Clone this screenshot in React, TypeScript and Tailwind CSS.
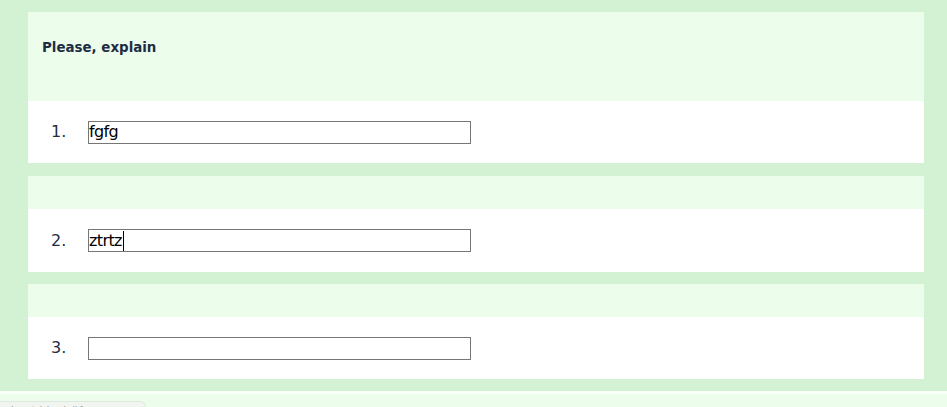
const questions = [
  { n: 1, value: "fgfg", label: "Please, explain", focused: false, body: "h-[62px]", gap: "mb-[13px]" },
  { n: 2, value: "ztrtz", label: "", focused: true, body: "h-[63px]", gap: "mb-[12px]" },
  { n: 3, value: "", label: "", focused: false, body: "h-[62px]", gap: "mb-[12px]" },
]

const Field = ({ value, focused }: { value: string; focused: boolean }) => (
  <div className="flex h-[23px] w-[383px] items-center border border-[#767676] bg-white text-[16px] leading-none text-black [font-family:'DejaVu_Sans',Verdana,sans-serif] tracking-[-0.6px]">
    <span>{value}</span>
    {focused && <span className="ml-[1px] h-[20px] w-px bg-black" />}
  </div>
)

const QuestionCard = ({ q }: { q: (typeof questions)[number] }) => (
  <div className={`flex flex-col ${q.gap}`}>
    <div className={`bg-[#edfdec] px-[14px] ${q.label ? "h-[89px] pt-[28px]" : "h-[33px]"}`}>
      {q.label && (
        <h3 className="text-[13.4px] font-bold leading-[16px] text-[#1e2d44] [font-family:'DejaVu_Sans',Verdana,sans-serif]">
          {q.label}
        </h3>
      )}
    </div>
    <div className={`flex items-center bg-white pl-[23px] ${q.body}`}>
      <span className="w-[37px] text-[16px] text-[#1e2d44] [font-family:'DejaVu_Sans',Verdana,sans-serif]">
        {q.n}.
      </span>
      <Field value={q.value} focused={q.focused} />
    </div>
  </div>
)

export default function App() {
  return (
    <div className="h-[407px] overflow-hidden bg-[#edfdec]">
      <div className="flex flex-col bg-[#d3f1d3] pl-[28px] pr-[23px] pt-[12px]">
        {questions.map((q) => (
          <QuestionCard key={q.n} q={q} />
        ))}
      </div>
      <div className="h-[3px] bg-[#f7fff6]" />
      <div className="pt-[7px]">
        <div className="h-[20px] w-[146px] overflow-hidden rounded-tr-[6px] border border-l-0 border-[#dfe8de] bg-[#f0f5ef] pl-[4px] pt-[2px] text-[11px] leading-[14px] text-[#a0a8a0] [font-family:'DejaVu_Sans',sans-serif]">
          about:blank#form-loaded
        </div>
      </div>
    </div>
  )
}
